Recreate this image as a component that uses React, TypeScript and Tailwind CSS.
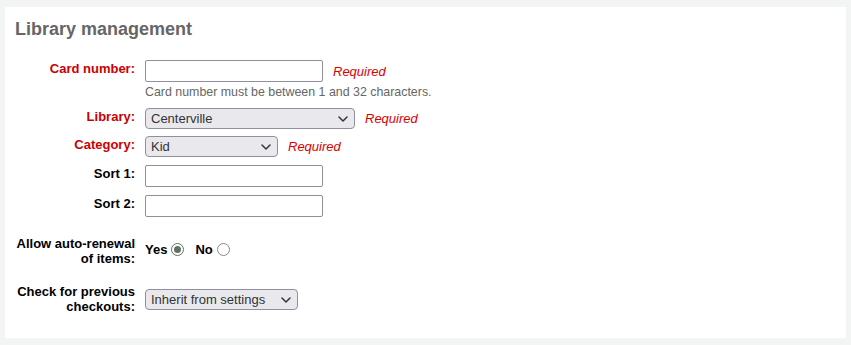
import { ChevronDown } from 'lucide-react';

const font = { fontFamily: '"Liberation Sans", Arial, sans-serif' };

function Required() {
  return <span className="ml-[10px] text-[13px] italic leading-[15px] text-[#dd0000]">Required</span>;
}

function Select({ value, width }: { value: string; width: string }) {
  return (
    <button
      type="button"
      className={`flex h-[21px] ${width} items-center justify-between rounded-[4px] border border-[#8f8f9d] bg-[#e9e9ed] pl-[5px] pr-[3px] text-left text-[13px] leading-[15px] text-[#333]`}
    >
      <span>{value}</span>
      <ChevronDown className="h-[16px] w-[16px] text-[#333]" strokeWidth={2.25} />
    </button>
  );
}

function TextInput() {
  return <input type="text" className="h-[22px] w-[178px] rounded-[2px] border border-[#8f8f9d] bg-white" />;
}

function Radio({ checked }: { checked?: boolean }) {
  return (
    <span
      className={`flex h-[13px] w-[13px] items-center justify-center rounded-full border ${
        checked ? 'border-[#5f7263]' : 'border-[#8a8a94]'
      } bg-white`}
    >
      {checked && <span className="h-[7px] w-[7px] rounded-full bg-[#5f7263]" />}
    </span>
  );
}

function Label({ children, red }: { children: React.ReactNode; red?: boolean }) {
  return (
    <label
      className={`w-[120px] shrink-0 pt-[1px] text-right text-[13px] font-bold leading-[15px] ${
        red ? 'text-[#cc0000]' : 'text-[#000]'
      }`}
    >
      {children}
    </label>
  );
}

export default function App() {
  return (
    <div className="min-h-[345px] bg-[#f3f4f4] pb-[7px] pl-[5px] pr-[5px] pt-[7px]" style={font}>
      <div className="h-[331px] bg-white px-[10px] pt-[11px]">
        <h2 className="text-[18px] font-bold leading-[22px] text-[#666]">Library management</h2>

        <div className="mt-[20px] flex items-start gap-[10px]">
          <Label red>Card number:</Label>
          <div className="flex items-center">
            <TextInput />
            <Required />
          </div>
        </div>
        <div className="mt-[3px] pl-[130px] text-[12.4px] leading-[15px] text-[#666]">
          Card number must be between 1 and 32 characters.
        </div>

        <div className="mt-[8px] flex items-start gap-[10px]">
          <Label red>Library:</Label>
          <div className="flex items-center">
            <Select value="Centerville" width="w-[210px]" />
            <Required />
          </div>
        </div>

        <div className="mt-[7px] flex items-start gap-[10px]">
          <Label red>Category:</Label>
          <div className="flex items-center">
            <Select value="Kid" width="w-[133px]" />
            <Required />
          </div>
        </div>

        <div className="mt-[8px] flex items-start gap-[10px]">
          <Label>Sort 1:</Label>
          <TextInput />
        </div>

        <div className="mt-[8px] flex items-start gap-[10px]">
          <Label>Sort 2:</Label>
          <TextInput />
        </div>

        <div className="mt-[18px] flex items-start gap-[10px]">
          <Label>
            Allow auto-renewal
            <br />
            of items:
          </Label>
          <div className="mt-[7px] flex items-center text-[13px] font-bold leading-[15px] text-black">
            <span>Yes</span>
            <span className="ml-[4px]">
              <Radio checked />
            </span>
            <span className="ml-[11px]">No</span>
            <span className="ml-[4px]">
              <Radio />
            </span>
          </div>
        </div>

        <div className="mt-[17px] flex items-start gap-[10px]">
          <Label>
            Check for previous
            <br />
            checkouts:
          </Label>
          <div className="mt-[6px]">
            <Select value="Inherit from settings" width="w-[153px]" />
          </div>
        </div>
      </div>
    </div>
  );
}
